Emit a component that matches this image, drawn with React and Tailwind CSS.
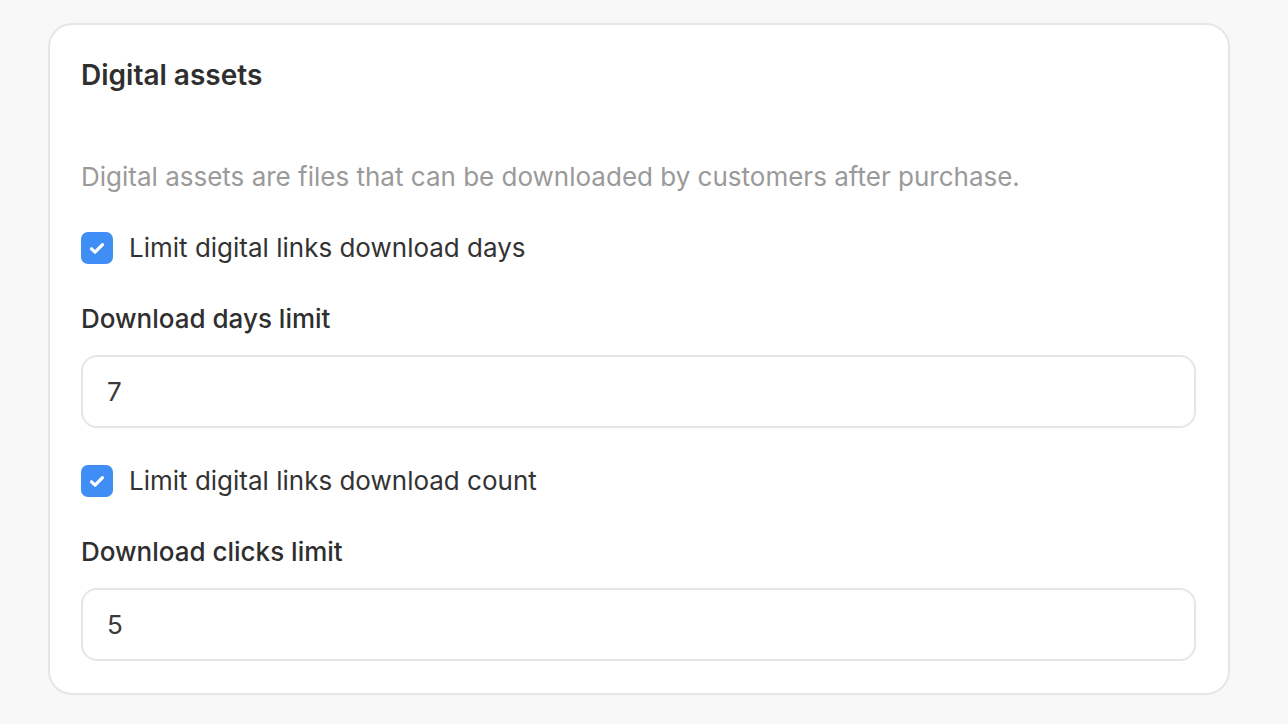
import React from 'react';

// Checkbox with a blue filled box and a white tick
function Check({ label }) {
  return (
    <label className="flex h-8 items-center gap-4">
      <span className="grid h-8 w-8 place-items-center rounded-[7px] bg-[#3f8ef6]">
        <svg width="32" height="32" viewBox="0 0 32 32" fill="none">
          <path d="M10.5 16.8l3.6 3.4 7.4-7.6" stroke="white" strokeWidth="3.2" strokeLinecap="round" strokeLinejoin="round" />
        </svg>
      </span>
      <span className="text-[26px] leading-8 text-[#333]">{label}</span>
    </label>
  );
}

function Field({ label, value }) {
  return (
    <div className="flex flex-col">
      <div className="text-[26px] font-medium leading-8 text-[#2f2f2f]">{label}</div>
      <div className="mt-5 flex h-[73px] items-center rounded-2xl border-2 border-[#e6e6e6] px-6 text-[26px] text-[#3a3a3a]">
        {value}
      </div>
    </div>
  );
}

export default function App() {
  return (
    <div className="min-h-screen bg-[#f8f8f8] pt-[23px] pl-12 pr-[58px] font-['Inter',sans-serif]">
      <div className="flex flex-col rounded-3xl border-2 border-[#e6e6e6] bg-white py-8 pl-[31px] pr-8">
        <h2 className="text-[28px] font-semibold leading-9 text-[#2f2f2f]">Digital assets</h2>
        <p className="mt-[68px] text-[26px] leading-8 text-[#9a9a9a]">
          Digital assets are files that can be downloaded by customers after purchase.
        </p>
        <div className="mt-[39px]">
          <Check label="Limit digital links download days" />
        </div>
        <div className="mt-[39px]">
          <Field label="Download days limit" value="7" />
        </div>
        <div className="mt-[37px]">
          <Check label="Limit digital links download count" />
        </div>
        <div className="mt-[39px]">
          <Field label="Download clicks limit" value="5" />
        </div>
      </div>
    </div>
  );
}
